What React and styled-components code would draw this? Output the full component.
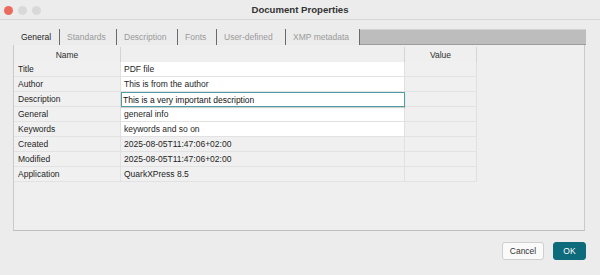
import React from "react";
import styled, { createGlobalStyle } from "styled-components";

const Global = createGlobalStyle`
  html, body { margin: 0; padding: 0; background: #ececec; }
  body { font-family: "Liberation Sans", Arial, sans-serif; }
  * { box-sizing: border-box; }
`;

const Window = styled.div`
  width: 600px;
  height: 275px;
  background: #ececec;
  display: flex;
  flex-direction: column;
  overflow: hidden;
`;

const TitleBar = styled.div`
  height: 20px;
  border-bottom: 1px solid #d6d6d6;
  background: #ececec;
  display: grid;
  grid-template-columns: 1fr auto 1fr;
  align-items: center;
  padding: 0 4px;
`;

const Lights = styled.div`
  display: flex;
  gap: 5px;
  align-items: center;
  padding-top: 1px;
`;

const Light = styled.span`
  width: 9px;
  height: 9px;
  border-radius: 50%;
  background: ${(p) => p.$color};
`;

const Title = styled.div`
  font-size: 9.6px;
  font-weight: bold;
  color: #333;
`;

const Body = styled.div`
  flex: 1;
  display: flex;
  flex-direction: column;
  padding: 9px 14px 0 13px;
`;

const TabBar = styled.div`
  display: flex;
  height: 16px;
  padding-left: 1px;
`;

const Tab = styled.div`
  width: ${(p) => p.$w}px;
  border-right: 1px solid #6a6a6a;
  font-size: 8.5px;
  color: ${(p) => (p.$active ? "#1e1e1e" : "#9a9a9a")};
  padding-left: 7px;
  display: flex;
  align-items: center;
`;

const TabFiller = styled.div`
  flex: 1;
  background: #bdbdbd;
  border-top: 1px solid #d2d2d2;
  border-bottom: 1px solid #9c9c9c;
`;

const Frame = styled.div`
  height: 186px;
  background: #efefef;
  border-left: 1px solid #cacaca;
  border-right: 1px solid #c9c9c9;
  border-bottom: 1px solid #bfbfbf;
  margin-right: 1px;
  display: flex;
  flex-direction: column;
`;

const Grid = styled.div`
  display: grid;
  grid-template-columns: 107px 284px 72px;
  grid-auto-rows: 15px;
  margin-top: 2px;
`;

const HeadCell = styled.div`
  height: 16px;
  border-right: 1px solid #d4d4d4;
  font-size: 8.5px;
  color: #2e2e2e;
  display: flex;
  align-items: center;
  justify-content: center;
  background: #efefef;
  border-bottom: 1px solid #e6e6e6;
`;

const Cell = styled.div`
  border-right: 1px solid #e0e0e0;
  border-bottom: 1px solid #e2e2e2;
  background: ${(p) => (p.$white ? "#ffffff" : "#f0f0f0")};
  font-size: 8.5px;
  color: #1e1e1e;
  padding-left: ${(p) => (p.$pad ? p.$pad : 0)}px;
  display: flex;
  align-items: center;
  white-space: nowrap;
  overflow: hidden;
`;

const EditCell = styled.div`
  border: 1px solid #4f9ca4;
  background: #fff;
  font-size: 8.5px;
  color: #141414;
  padding-left: 1px;
  display: flex;
  align-items: center;
  white-space: nowrap;
  box-shadow: 0 1px 1px rgba(0, 0, 0, 0.18);
  position: relative;
  z-index: 1;
`;

const Footer = styled.div`
  display: flex;
  justify-content: flex-end;
  gap: 9px;
  padding-top: 11px;
`;

const Button = styled.button`
  height: 18px;
  width: ${(p) => p.$w}px;
  border-radius: 3px;
  font-family: inherit;
  font-size: 8.5px;
  padding: 0;
  border: 1px solid ${(p) => (p.$primary ? "#0e6b7c" : "#cfcfcf")};
  background: ${(p) => (p.$primary ? "#0e6b7c" : "#fafafa")};
  color: ${(p) => (p.$primary ? "#fff" : "#333")};
`;

const tabs = [
  { label: "General", w: 46, active: true },
  { label: "Standards", w: 57 },
  { label: "Description", w: 61 },
  { label: "Fonts", w: 39 },
  { label: "User-defined", w: 69 },
  { label: "XMP metadata", w: 74 },
];

const rows = [
  { name: "Title", value: "PDF file", white: true },
  { name: "Author", value: "This is from the author", white: true },
  { name: "Description", value: "This is a very important description", edit: true },
  { name: "General", value: "general info", white: true },
  { name: "Keywords", value: "keywords and so on", white: true },
  { name: "Created", value: "2025-08-05T11:47:06+02:00" },
  { name: "Modified", value: "2025-08-05T11:47:06+02:00" },
  { name: "Application", value: "QuarkXPress 8.5" },
];

export default function App() {
  return (
    <>
      <Global />
      <Window>
        <TitleBar>
          <Lights>
            <Light $color="#ec6a5e" />
            <Light $color="#d9d9d9" />
            <Light $color="#d9d9d9" />
          </Lights>
          <Title>Document Properties</Title>
          <div />
        </TitleBar>
        <Body>
          <TabBar>
            {tabs.map((t) => (
              <Tab key={t.label} $w={t.w} $active={t.active}>
                {t.label}
              </Tab>
            ))}
            <TabFiller />
          </TabBar>
          <Frame>
            <Grid>
              <HeadCell>Name</HeadCell>
              <HeadCell />
              <HeadCell>Value</HeadCell>
              {rows.map((r) => (
                <React.Fragment key={r.name}>
                  <Cell $pad={4}>{r.name}</Cell>
                  {r.edit ? (
                    <EditCell>{r.value}</EditCell>
                  ) : (
                    <Cell $pad={3} $white={r.white}>
                      {r.value}
                    </Cell>
                  )}
                  <Cell />
                </React.Fragment>
              ))}
            </Grid>
          </Frame>
          <Footer>
            <Button $w={42}>Cancel</Button>
            <Button $w={33} $primary>
              OK
            </Button>
          </Footer>
        </Body>
      </Window>
    </>
  );
}
